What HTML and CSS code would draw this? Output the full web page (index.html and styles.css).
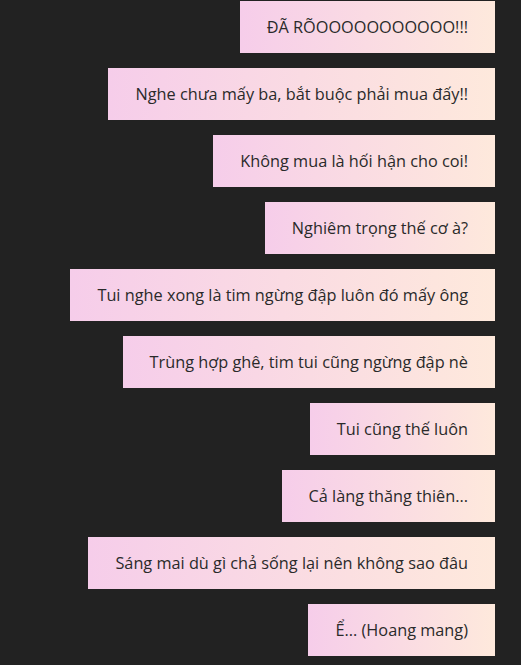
FILE: index.html
```html
<!DOCTYPE html>
<html lang="vi">
<head>
  <meta charset="UTF-8">
  <meta name="viewport" content="width=device-width, initial-scale=1.0">
  <title>Chat</title>
  <link rel="stylesheet" href="styles.css">
</head>
<body>
  <div class="chat">
    <div class="bubble">ĐÃ RÕOOOOOOOOOOO!!!</div>
    <div class="bubble">Nghe chưa mấy ba, bắt buộc phải mua đấy!!</div>
    <div class="bubble">Không mua là hối hận cho coi!</div>
    <div class="bubble">Nghiêm trọng thế cơ à?</div>
    <div class="bubble">Tui nghe xong là tim ngừng đập luôn đó mấy ông</div>
    <div class="bubble">Trùng hợp ghê, tim tui cũng ngừng đập nè</div>
    <div class="bubble">Tui cũng thế luôn</div>
    <div class="bubble">Cả làng thăng thiên...</div>
    <div class="bubble">Sáng mai dù gì chả sống lại nên không sao đâu</div>
    <div class="bubble">Ể... (Hoang mang)</div>
  </div>
</body>
</html>
```

FILE: styles.css
```css
body {
  margin: 0;
  background-color: #222222;
  font-family: "Open Sans", "Noto Sans", sans-serif;
}
.chat {
  display: flex;
  flex-direction: column;
  align-items: flex-end;
  gap: 15px;
  padding: 1px 26px 10px 0;
}
.bubble {
  background: linear-gradient(to right, #f6cdea, #fee9dc);
  color: #2a2a2a;
  font-size: 16.3px;
  line-height: 20px;
  padding: 16px 27px;
}
```
